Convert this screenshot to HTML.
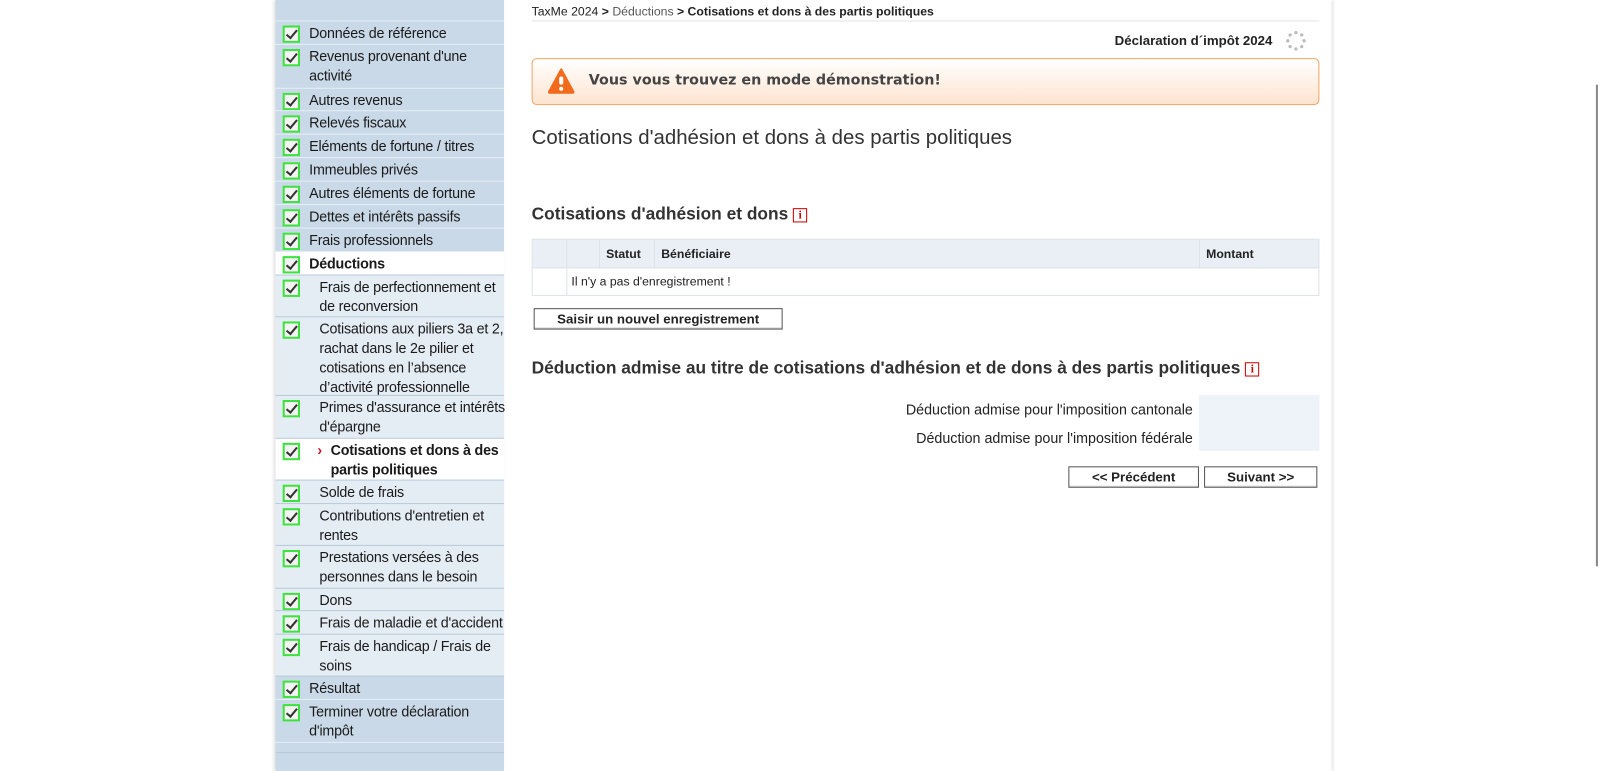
<!DOCTYPE html>
<html><head><meta charset="utf-8"><style>
*{box-sizing:border-box;margin:0;padding:0}
body{width:1600px;height:756px;overflow:hidden;background:#fff;font-family:"Liberation Sans",Arial,sans-serif;color:#222;position:relative}
#wrap{position:absolute;left:0;top:0;width:1568px;height:741px;transform:scale(1.0204);transform-origin:0 0}
#side{position:absolute;left:270px;top:0;width:224px;height:756px;background:#c9d9e7;box-shadow:-2px 0 3px rgba(0,0,0,.12)}
.it{position:absolute;left:0;width:224px;border-top:1px solid #e6eef5;font-size:14px;line-height:19px;padding:2px 0 0 33px;color:#1a1a1a;white-space:nowrap;letter-spacing:-0.2px}
.it.sub{background:#e5edf4;padding-left:43px;border-top:1px solid #b9cad9}
.it.act{background:#fff;font-weight:bold}
.cb{position:absolute;left:7px;top:4px;width:17px;height:17px;border:2px solid #3ee23e;background:#f3f3f3}
.cb:after{content:"";position:absolute;left:4px;top:0px;width:4px;height:9px;border:solid #333;border-width:0 2px 2px 0;transform:rotate(40deg)}
#main{position:absolute;left:497px;top:0;width:808px;height:756px;box-shadow:2px 0 3px rgba(0,0,0,.12)}
.abs{position:absolute}
.info{display:inline-block;width:14px;height:14px;border:1px solid #c00;color:#c00;font:bold 11px "Liberation Serif",serif;text-align:center;line-height:12px;vertical-align:1px;background:#fff}
.btn{position:absolute;border:1px solid #555;background:#fff;font:bold 13px "Liberation Sans",Arial,sans-serif;text-align:center;line-height:19px;color:#222;box-shadow:inset 0 -1px 0 #ccc}
td,th{border:1px solid #dde3ea;font-size:12px;text-align:left;padding:0 6px}
</style></head><body><div id="wrap">
<div id="side">
<div class="it" style="top:0;height:20px;border:none"></div>
<div class="it" style="top:20px;height:23px"><span class="cb"></span>Données de référence</div>
<div class="it" style="top:43px;height:43px"><span class="cb"></span>Revenus provenant d'une<br>activité</div>
<div class="it" style="top:86px;height:22px"><span class="cb"></span>Autres revenus</div>
<div class="it" style="top:108px;height:23px"><span class="cb"></span>Relevés fiscaux</div>
<div class="it" style="top:131px;height:23px"><span class="cb"></span>Eléments de fortune / titres</div>
<div class="it" style="top:154px;height:23px"><span class="cb"></span>Immeubles privés</div>
<div class="it" style="top:177px;height:23px"><span class="cb"></span>Autres éléments de fortune</div>
<div class="it" style="top:200px;height:23px"><span class="cb"></span>Dettes et intérêts passifs</div>
<div class="it" style="top:223px;height:23px"><span class="cb"></span>Frais professionnels</div>
<div class="it act" style="top:246px;height:23px"><span class="cb"></span>Déductions</div>
<div class="it sub" style="top:269px;height:41px"><span class="cb"></span>Frais de perfectionnement et<br>de reconversion</div>
<div class="it sub" style="top:310px;height:77px"><span class="cb"></span>Cotisations aux piliers 3a et 2,<br>rachat dans le 2e pilier et<br>cotisations en l’absence<br>d’activité professionnelle</div>
<div class="it sub" style="top:387px;height:42px"><span class="cb"></span>Primes d'assurance et intérêts<br>d'épargne</div>
<div class="it sub act" style="top:429px;height:41px;padding-left:54px"><span class="cb"></span><span style="position:absolute;left:41px;color:#d0102a">›</span>Cotisations et dons à des<br>partis politiques</div>
<div class="it sub" style="top:470px;height:23px"><span class="cb"></span>Solde de frais</div>
<div class="it sub" style="top:493px;height:41px"><span class="cb"></span>Contributions d'entretien et<br>rentes</div>
<div class="it sub" style="top:534px;height:42px"><span class="cb"></span>Prestations versées à des<br>personnes dans le besoin</div>
<div class="it sub" style="top:576px;height:22px"><span class="cb"></span>Dons</div>
<div class="it sub" style="top:598px;height:23px"><span class="cb"></span>Frais de maladie et d'accident</div>
<div class="it sub" style="top:621px;height:41px"><span class="cb"></span>Frais de handicap / Frais de<br>soins</div>
<div class="it" style="top:662px;height:23px;border-top-color:#b9cad9"><span class="cb"></span>Résultat</div>
<div class="it" style="top:685px;height:42px"><span class="cb"></span>Terminer votre déclaration<br>d'impôt</div>
<div class="it" style="top:727px;height:10px"></div>
<div class="it" style="top:737px;height:19px;border-top-color:#b9cad9"></div>
</div>
<div id="main"></div>
<div class="abs" style="left:521px;top:4px;font-size:12px">TaxMe 2024 <b>&gt;</b> <span style="color:#555">Déductions</span> <b>&gt; Cotisations et dons à des partis politiques</b></div>
<div class="abs" style="left:521px;top:20px;width:772px;border-top:1px solid #e3e3e3"></div>
<div class="abs" style="left:1000px;top:32px;width:247px;text-align:right;font-size:13px;font-weight:bold">Déclaration d´impôt 2024</div>
<svg class="abs" style="left:1259px;top:29px" width="22" height="22" viewBox="0 0 22 22"><g fill="#bbb"><circle cx="11" cy="3" r="1.6"/><circle cx="16.7" cy="5.3" r="1.6"/><circle cx="19" cy="11" r="1.6"/><circle cx="16.7" cy="16.7" r="1.6"/><circle cx="11" cy="19" r="1.6"/><circle cx="5.3" cy="16.7" r="1.6"/><circle cx="3" cy="11" r="1.6"/><circle cx="5.3" cy="5.3" r="1.6"/></g></svg>
<div class="abs" style="left:521px;top:57px;width:772px;height:46px;border:1px solid #f0a467;border-radius:5px;background:linear-gradient(#fff,#fde4cf)"></div>
<svg class="abs" style="left:537px;top:67px" width="26" height="25" viewBox="0 0 26 25"><path d="M13 1 L25 23 Q25 24 24 24 L2 24 Q1 24 1 23 Z" fill="#f26a1b" stroke="#f26a1b" stroke-linejoin="round" stroke-width="2"/><rect x="11" y="8" width="4" height="8" rx="2" fill="#fff"/><circle cx="13" cy="20" r="2" fill="#fff"/></svg>
<div class="abs" style="left:577px;top:71px;font:bold 14px 'DejaVu Sans',sans-serif;color:#444">Vous vous trouvez en mode démonstration!</div>
<div class="abs" style="left:521px;top:124px;font-size:20px;color:#333">Cotisations d'adhésion et dons à des partis politiques</div>
<div class="abs" style="left:521px;top:200px;font-size:17px;font-weight:bold;color:#333">Cotisations d'adhésion et dons <span class="info">i</span></div>
<table class="abs" style="left:521px;top:234px;width:772px;border-collapse:collapse">
<tr style="height:28px;background:#e9eff5"><th style="width:34px"></th><th style="width:32px"></th><th style="width:54px">Statut</th><th style="width:534px">Bénéficiaire</th><th>Montant</th></tr>
<tr style="height:27px"><td></td><td colspan="4" style="font-size:12px;padding-left:4px">Il n'y a pas d'enregistrement !</td></tr>
</table>
<div class="btn" style="left:523px;top:302px;width:244px;height:21px">Saisir un nouvel enregistrement</div>
<div class="abs" style="left:521px;top:351px;font-size:17px;font-weight:bold;color:#333">Déduction admise au titre de cotisations d'adhésion et de dons à des partis politiques <span class="info">i</span></div>
<div class="abs" style="left:800px;top:393px;width:369px;text-align:right;font-size:14px">Déduction admise pour l'imposition cantonale</div>
<div class="abs" style="left:800px;top:421px;width:369px;text-align:right;font-size:14px">Déduction admise pour l'imposition fédérale</div>
<div class="abs" style="left:1175px;top:387px;width:118px;height:55px;background:#eef3f9"></div>
<div class="btn" style="left:1047px;top:457px;width:128px;height:21px">&lt;&lt; Précédent</div>
<div class="btn" style="left:1180px;top:457px;width:111px;height:21px">Suivant &gt;&gt;</div>
<div class="abs" style="left:1564px;top:83px;width:2px;height:472px;background:#888"></div>
</div></body></html>
